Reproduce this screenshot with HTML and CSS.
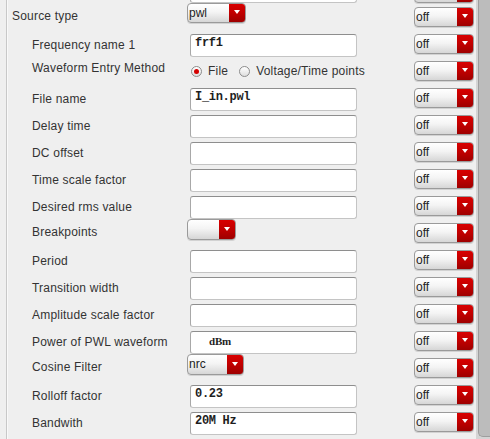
FILE: index.html
```html
<!DOCTYPE html>
<html>
<head>
<meta charset="utf-8">
<link rel="stylesheet" href="styles.css">
</head>
<body>
<div class="window">
  <div class="panel">
    <div class="row first">
      <span class="label"></span>
      <div class="cell"><div class="field"></div></div>
      <div class="opt"><div class="select off"><span class="val"></span><span class="btn"><i></i></span></div></div>
    </div>
    <div class="row dd">
      <span class="label">Source type</span>
      <div class="cell"><div class="select w-pwl"><span class="val">pwl</span><span class="btn"><i></i></span></div></div>
      <div class="opt"><div class="select off"><span class="val">off</span><span class="btn"><i></i></span></div></div>
    </div>
    <div class="row">
      <span class="label sub">Frequency name 1</span>
      <div class="cell"><div class="field">frf1</div></div>
      <div class="opt"><div class="select off"><span class="val">off</span><span class="btn"><i></i></span></div></div>
    </div>
    <div class="row rad">
      <span class="label sub">Waveform Entry Method</span>
      <div class="cell">
        <div class="radios">
          <span class="radio on"></span><span class="rtext">File</span>
          <span class="radio"></span><span class="rtext">Voltage/Time points</span>
        </div>
      </div>
      <div class="opt"><div class="select off"><span class="val">off</span><span class="btn"><i></i></span></div></div>
    </div>
    <div class="row">
      <span class="label sub">File name</span>
      <div class="cell"><div class="field">I_in.pwl</div></div>
      <div class="opt"><div class="select off"><span class="val">off</span><span class="btn"><i></i></span></div></div>
    </div>
    <div class="row">
      <span class="label sub">Delay time</span>
      <div class="cell"><div class="field"></div></div>
      <div class="opt"><div class="select off"><span class="val">off</span><span class="btn"><i></i></span></div></div>
    </div>
    <div class="row">
      <span class="label sub">DC offset</span>
      <div class="cell"><div class="field"></div></div>
      <div class="opt"><div class="select off"><span class="val">off</span><span class="btn"><i></i></span></div></div>
    </div>
    <div class="row">
      <span class="label sub">Time scale factor</span>
      <div class="cell"><div class="field"></div></div>
      <div class="opt"><div class="select off"><span class="val">off</span><span class="btn"><i></i></span></div></div>
    </div>
    <div class="row">
      <span class="label sub">Desired rms value</span>
      <div class="cell"><div class="field"></div></div>
      <div class="opt"><div class="select off"><span class="val">off</span><span class="btn"><i></i></span></div></div>
    </div>
    <div class="row dd">
      <span class="label sub">Breakpoints</span>
      <div class="cell"><div class="select w-bp"><span class="val"></span><span class="btn"><i></i></span></div></div>
      <div class="opt"><div class="select off"><span class="val">off</span><span class="btn"><i></i></span></div></div>
    </div>
    <div class="row">
      <span class="label sub">Period</span>
      <div class="cell"><div class="field"></div></div>
      <div class="opt"><div class="select off"><span class="val">off</span><span class="btn"><i></i></span></div></div>
    </div>
    <div class="row">
      <span class="label sub">Transition width</span>
      <div class="cell"><div class="field"></div></div>
      <div class="opt"><div class="select off"><span class="val">off</span><span class="btn"><i></i></span></div></div>
    </div>
    <div class="row">
      <span class="label sub">Amplitude scale factor</span>
      <div class="cell"><div class="field"></div></div>
      <div class="opt"><div class="select off"><span class="val">off</span><span class="btn"><i></i></span></div></div>
    </div>
    <div class="row">
      <span class="label sub">Power of PWL waveform</span>
      <div class="cell"><div class="field unit">dBm</div></div>
      <div class="opt"><div class="select off"><span class="val">off</span><span class="btn"><i></i></span></div></div>
    </div>
    <div class="row dd">
      <span class="label sub">Cosine Filter</span>
      <div class="cell"><div class="select w-nrc"><span class="val">nrc</span><span class="btn"><i></i></span></div></div>
      <div class="opt"><div class="select off"><span class="val">off</span><span class="btn"><i></i></span></div></div>
    </div>
    <div class="row">
      <span class="label sub">Rolloff factor</span>
      <div class="cell"><div class="field">0.23</div></div>
      <div class="opt"><div class="select off"><span class="val">off</span><span class="btn"><i></i></span></div></div>
    </div>
    <div class="row">
      <span class="label sub">Bandwith</span>
      <div class="cell"><div class="field">20M Hz</div></div>
      <div class="opt"><div class="select off"><span class="val">off</span><span class="btn"><i></i></span></div></div>
    </div>
    <div class="row">
      <span class="label sub"></span>
      <div class="cell"><div class="field"></div></div>
      <div class="opt"><div class="select off"><span class="val"></span><span class="btn"><i></i></span></div></div>
    </div>
  </div>
  <div class="scrollbar"><div class="thumb"></div></div>
</div>
</body>
</html>
```

FILE: styles.css
```css
html, body {
  margin: 0;
  padding: 0;
}
body {
  width: 490px;
  height: 439px;
  overflow: hidden;
  background: #efefef;
  font-family: "Liberation Sans", Arial, sans-serif;
  font-size: 12px;
  color: #333333;
}
.window {
  display: flex;
  height: 439px;
  overflow: hidden;
}
.panel {
  margin-left: 6px;
  margin-top: -24px;
  width: 468px;
  flex: none;
  border-left: 1px solid #c8c8c8;
  box-shadow: inset 1px 0 0 #f9f9f9;
}
.row {
  display: grid;
  grid-template-columns: 180px 227px 60px;
  height: 27px;
  align-items: start;
}
.label {
  display: block;
  padding-left: 5px;
  padding-top: 7px;
  line-height: 16px;
  letter-spacing: 0.2px;
  white-space: nowrap;
  color: #333333;
}
.label.sub {
  padding-left: 25px;
}
.row.dd .label {
  padding-top: 5px;
}
.row.rad .label {
  padding-top: 3px;
}
.cell {
  display: flex;
  align-items: flex-start;
}
.field {
  box-sizing: border-box;
  margin-left: 3px;
  margin-top: 4px;
  width: 167px;
  height: 23px;
  padding: 0 4px;
  background: #ffffff;
  border: 1px solid #c4c4c4;
  border-top-color: #8e8e8e;
  border-left-color: #a8a8a8;
  border-radius: 3px;
  font-family: "Liberation Mono", "Courier New", monospace;
  font-weight: bold;
  font-size: 12px;
  letter-spacing: -0.3px;
  line-height: 17px;
  color: #1e1e1e;
  white-space: pre;
}
.field.unit {
  padding-left: 18px;
  font-family: "Liberation Serif", "Times New Roman", serif;
  font-size: 11px;
  letter-spacing: -0.2px;
  line-height: 18px;
}
.select {
  box-sizing: border-box;
  display: flex;
  height: 20px;
  border: 1px solid #9a9a9a;
  border-radius: 4px;
  overflow: hidden;
  background: linear-gradient(#ffffff, #f4f4f4 45%, #d6d6d6);
  box-shadow: 0 1px 0 rgba(0,0,0,0.12);
}
.select .val {
  flex: 1;
  padding-left: 1px;
  line-height: 18px;
  font-size: 12px;
  color: #222;
  white-space: nowrap;
}
.select .btn {
  width: 16px;
  flex: none;
  display: flex;
  align-items: center;
  justify-content: center;
  padding-bottom: 2px;
  box-sizing: border-box;
  background: linear-gradient(#d80000, #c00000 50%, #9e0000);
}
.select .btn i {
  display: block;
  width: 0;
  height: 0;
  border-left: 3.5px solid transparent;
  border-right: 3.5px solid transparent;
  border-top: 4px solid #ffffff;
}
.w-pwl { width: 59px; }
.w-bp { width: 49px; height: 21px; }
.w-nrc { width: 57px; height: 21px; }
.select.off {
  width: 60px;
  margin-top: 4px;
}
.row.first .select.off {
  margin-top: 7px;
}
.radios {
  display: flex;
  align-items: center;
  margin-left: 4px;
  margin-top: 8px;
  height: 12px;
  letter-spacing: 0.2px;
}
.radio {
  box-sizing: border-box;
  width: 11px;
  height: 11px;
  border-radius: 50%;
  border: 1px solid #8c8c8c;
  background: linear-gradient(#ffffff, #dedede);
  display: flex;
  align-items: center;
  justify-content: center;
  flex: none;
}
.radio.on::after {
  content: "";
  width: 5px;
  height: 5px;
  border-radius: 50%;
  background: #d40000;
}
.rtext {
  margin-left: 6px;
  margin-right: 11px;
  line-height: 12px;
  white-space: nowrap;
}
.scrollbar {
  margin-left: 1px;
  width: 15px;
  flex: none;
  height: 439px;
  background: #d4d4d4;
}
.thumb {
  margin-left: 2px;
  height: 437px;
  box-sizing: border-box;
  background: #bcbcbc;
  border-left: 1px solid #9e9e9e;
  border-bottom: 1px solid #9e9e9e;
  border-bottom-left-radius: 5px;
}
```
